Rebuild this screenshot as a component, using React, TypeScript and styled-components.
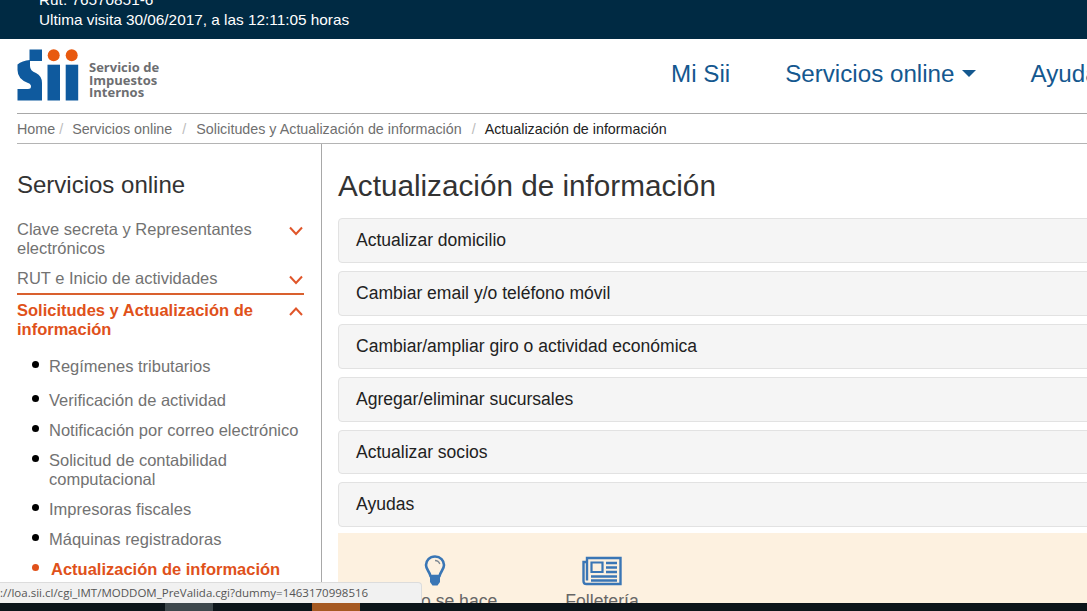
import React from "react";
import styled, { createGlobalStyle } from "styled-components";

const Global = createGlobalStyle`
  html, body { margin: 0; padding: 0; background: #fff; overflow: hidden; }
  * { box-sizing: border-box; }
  body { font-family: "Liberation Sans", Arial, sans-serif; }
`;

const Page = styled.div`
  position: relative;
  width: 1087px;
  height: 611px;
  overflow: hidden;
  background: #fff;
`;

const TopBar = styled.div`
  height: 39px;
  background: #002a43;
  color: #fff;
  padding: 0 0 9px 39px;
  font-size: 15.35px;
  line-height: 20px;
  overflow: hidden;
  display: flex;
  flex-direction: column;
  justify-content: flex-end;
`;

const TopLine = styled.div`
  white-space: nowrap;
`;

const HeaderRow = styled.div`
  height: 74px;
  display: flex;
  align-items: center;
  padding-left: 17px;
  white-space: nowrap;
`;

const LogoMark = styled.svg`
  width: 62px;
  height: 53px;
  flex: none;
  margin-top: -2px;
`;

const LogoText = styled.div`
  flex: none;
  margin-left: 10px;
  margin-top: 8px;
  width: 93px;
  font-family: "Open Sans", sans-serif;
  font-weight: 700;
  font-size: 13px;
  line-height: 12.8px;
  color: #6d6e71;
`;

const Nav = styled.nav`
  flex: none;
  display: flex;
  align-items: center;
  margin-left: 489px;
  margin-top: -5px;
`;

const NavLink = styled.a<{ $gap: number }>`
  color: #14588f;
  font-size: 24.2px;
  margin-right: ${(p) => p.$gap}px;
  display: inline-flex;
  align-items: center;
`;

const Caret = styled.span`
  display: inline-block;
  width: 0;
  height: 0;
  margin-left: 7px;
  margin-top: -1px;
  border-left: 7.5px solid transparent;
  border-right: 7.5px solid transparent;
  border-top: 7.5px solid #14588f;
`;

const Crumbs = styled.div`
  margin-left: 17px;
  height: 31px;
  border-top: 1.5px solid #a8a8a8;
  border-bottom: 1.5px solid #b4b4b4;
  display: flex;
  align-items: center;
  font-size: 14.3px;
  color: #6f6f6f;
  white-space: nowrap;
`;

const Crumb = styled.span<{ $current?: boolean }>`
  color: ${(p) => (p.$current ? "#222" : "#6f6f6f")};
`;

const Slash = styled.span<{ $l: number; $r: number }>`
  color: #bcbcbc;
  margin: 0 ${(p) => p.$r}px 0 ${(p) => p.$l}px;
`;

const Body = styled.div`
  display: flex;
  align-items: stretch;
  height: 468px;
`;

const Sidebar = styled.aside`
  width: 322px;
  flex: none;
  padding: 0 17px;
  border-right: 1.5px solid #a8a8a8;
`;

const SideTitle = styled.h2`
  margin: 27px 0 21px;
  font-size: 24px;
  line-height: 28px;
  font-weight: 400;
  color: #333;
`;

const Section = styled.div<{ $active?: boolean; $mb?: number }>`
  display: flex;
  justify-content: space-between;
  align-items: flex-start;
  font-size: 16.5px;
  line-height: 19px;
  color: ${(p) => (p.$active ? "#e0511a" : "#727272")};
  font-weight: ${(p) => (p.$active ? 700 : 400)};
  margin-bottom: ${(p) => p.$mb ?? 0}px;
`;

const SectionLabel = styled.span`
  max-width: 265px;
`;

const Chevron = styled.svg`
  width: 16px;
  height: 10px;
  flex: none;
  margin-top: 5.5px;
  fill: none;
  stroke: #e0562a;
  stroke-width: 2;
`;

const Rule = styled.div`
  height: 2px;
  background: #d9602e;
  margin: 5px 0 6px;
`;

const SubList = styled.ul`
  list-style: none;
  margin: 18px 0 0;
  padding: 0 0 0 15px;
`;

const SubItem = styled.li<{ $active?: boolean; $mt: number }>`
  position: relative;
  margin-top: ${(p) => p.$mt}px;
  padding-left: ${(p) => (p.$active ? 19 : 17)}px;
  font-size: 16.5px;
  line-height: 19px;
  color: ${(p) => (p.$active ? "#e0511a" : "#727272")};
  font-weight: ${(p) => (p.$active ? 700 : 400)};
  white-space: pre-line;

  &::before {
    content: "";
    position: absolute;
    left: 0;
    top: 4px;
    width: 7px;
    height: 7px;
    border-radius: 50%;
    background: ${(p) => (p.$active ? "#e0511a" : "#000")};
  }
`;

const Main = styled.main`
  flex: 1;
  min-width: 0;
  padding-left: 16px;
`;

const Title = styled.h1`
  margin: 24px 0 15px;
  font-size: 29.7px;
  line-height: 35px;
  font-weight: 400;
  color: #333;
  white-space: nowrap;
`;

const Rows = styled.div`
  display: flex;
  flex-direction: column;
  gap: 8px;
  margin-right: -20px;
`;

const Row = styled.div`
  height: 44.9px;
  padding-left: 17px;
  display: flex;
  align-items: center;
  background: #f5f5f5;
  border: 1px solid #e2e2e2;
  border-radius: 4px;
  font-size: 17.55px;
  color: #222;
`;

const Promo = styled.div`
  margin: 6px -20px 0 0;
  height: 120px;
  background: #fdf1e0;
  display: flex;
  padding-left: 30px;
  padding-top: 21px;
`;

const PromoItem = styled.div<{ $w: number }>`
  width: ${(p) => p.$w}px;
  display: flex;
  flex-direction: column;
  align-items: center;
  font-size: 17.6px;
  color: #666;
  white-space: nowrap;
`;

const PromoIcon = styled.svg<{ $mr?: number }>`
  height: 34px;
  flex: none;
  margin: 0 ${(p) => p.$mr ?? 0}px 3px 0;
`;

const Taskbar = styled.div`
  position: absolute;
  left: 0;
  right: 0;
  bottom: 0;
  height: 8px;
  background: #0c151a;
`;

const TaskButton = styled.span<{ $x: number; $c: string }>`
  position: absolute;
  top: 0;
  bottom: 0;
  left: ${(p) => p.$x}px;
  width: 48px;
  background: ${(p) => p.$c};
`;

const StatusTip = styled.div`
  position: absolute;
  left: 0;
  top: 582px;
  width: 422px;
  height: 21px;
  background: #f1f1f1;
  border: 1px solid #dcdcdc;
  border-left: none;
  border-bottom: none;
  border-top-right-radius: 4px;
  font-family: "Open Sans", sans-serif;
  font-size: 11.5px;
  line-height: 20px;
  color: #555;
  overflow: hidden;
  white-space: nowrap;
`;

const Down = () => (
  <Chevron viewBox="0 0 16 10"><path d="M2 1.5 8 8 14 1.5" /></Chevron>
);
const Up = () => (
  <Chevron viewBox="0 0 16 10"><path d="M2 8 8 1.5 14 8" /></Chevron>
);

const subs: { t: string; mt: number; active?: boolean }[] = [
  { t: "Regímenes tributarios", mt: 0 },
  { t: "Verificación de actividad", mt: 15 },
  { t: "Notificación por correo electrónico", mt: 11 },
  { t: "Solicitud de contabilidad\ncomputacional", mt: 11 },
  { t: "Impresoras fiscales", mt: 11 },
  { t: "Máquinas registradoras", mt: 11 },
  { t: "Actualización de información", mt: 11, active: true },
];

const rows = [
  "Actualizar domicilio",
  "Cambiar email y/o teléfono móvil",
  "Cambiar/ampliar giro o actividad económica",
  "Agregar/eliminar sucursales",
  "Actualizar socios",
  "Ayudas",
];

export default function App() {
  return (
    <Page>
      <Global />
      <TopBar>
        <TopLine>Rut: 76570851-6</TopLine>
        <TopLine>Ultima visita 30/06/2017, a las 12:11:05 horas</TopLine>
      </TopBar>
      <HeaderRow>
        <LogoMark viewBox="17 50 62 53">
          <path
            fill="#0f5a9e"
            d="M17.5 65.5Q22 61.5 30 61V67Q30 72 36 74 42 77 42 84V101.5H17.5V90H28Q31 90 31 87.5 31 85 28 84 17.5 80 17.5 71Z"
          />
          <rect x="29.5" y="50.5" width="12.5" height="11.5" fill="#0f5a9e" />
          <rect x="47.5" y="65.7" width="12.5" height="35.8" fill="#0f5a9e" />
          <rect x="65.7" y="65.7" width="12.5" height="35.8" fill="#0f5a9e" />
          <circle cx="53.7" cy="56.3" r="6" fill="#e8590f" />
          <circle cx="71.7" cy="56.3" r="6" fill="#e8590f" />
        </LogoMark>
        <LogoText>
          Servicio de
          <br />
          Impuestos
          <br />
          Internos
        </LogoText>
        <Nav>
          <NavLink $gap={55}>Mi Sii</NavLink>
          <NavLink $gap={55}>
            Servicios online
            <Caret />
          </NavLink>
          <NavLink $gap={0}>Ayuda</NavLink>
        </Nav>
      </HeaderRow>
      <Crumbs>
        <Crumb>Home</Crumb>
        <Slash $l={4} $r={9}>/</Slash>
        <Crumb>Servicios online</Crumb>
        <Slash $l={10} $r={10}>/</Slash>
        <Crumb>Solicitudes y Actualización de información</Crumb>
        <Slash $l={10} $r={9}>/</Slash>
        <Crumb $current>Actualización de información</Crumb>
      </Crumbs>
      <Body>
        <Sidebar>
          <SideTitle>Servicios online</SideTitle>
          <Section $mb={11}>
            <SectionLabel>Clave secreta y Representantes electrónicos</SectionLabel>
            <Down />
          </Section>
          <Section>
            <SectionLabel>RUT e Inicio de actividades</SectionLabel>
            <Down />
          </Section>
          <Rule />
          <Section $active>
            <SectionLabel>Solicitudes y Actualización de información</SectionLabel>
            <Up />
          </Section>
          <SubList>
            {subs.map((s) => (
              <SubItem key={s.t} $mt={s.mt} $active={s.active}>
                {s.t}
              </SubItem>
            ))}
          </SubList>
        </Sidebar>
        <Main>
          <Title>Actualización de información</Title>
          <Rows>
            {rows.map((r) => (
              <Row key={r}>{r}</Row>
            ))}
          </Rows>
          <Promo>
            <PromoItem $w={150}>
              <PromoIcon viewBox="0 0 24 34" width="24" $mr={16}>
                <path
                  d="M12 2.500C6.500 2.500 3 6.500 3 11c0 4.500 3.500 6.500 4.500 11h9c1-4.500 4.500-6.500 4.500-11 0-4.500-3.500-8.500-9-8.500Z"
                  fill="none"
                  stroke="#3a76b5"
                  strokeWidth="2.600"
                />
                <path d="M12 6.500c2 0 4 1.300 4.800 3.500" fill="none" stroke="#7f8a94" strokeWidth="1.300" />
                <path d="M7 22h10v6l-2.500 3.500h-5L7 28Z" fill="#3a76b5" />
              </PromoIcon>
              Cómo se hace.
            </PromoItem>
            <PromoItem $w={168}>
              <PromoIcon viewBox="0 0 40 29" width="40">
                <path
                  d="M5 1.500H38.500V27.500H4.500C2.500 27.500 1.500 26 1.500 24.500V5.500H5ZM5 5.500V24"
                  fill="none"
                  stroke="#3a76b5"
                  strokeWidth="2.400"
                />
                <path d="M9.500 6h11v9.500h-11Z" fill="none" stroke="#3a76b5" strokeWidth="2.200" />
                <path
                  d="M24 6.500h11M24 11h11M24 15.500h11M9 20h26M9 24h26"
                  stroke="#3a76b5"
                  strokeWidth="2.400"
                />
              </PromoIcon>
              Folletería
            </PromoItem>
          </Promo>
        </Main>
      </Body>
      <Taskbar>
        <TaskButton $x={165} $c="#3d474c" />
        <TaskButton $x={312} $c="#a65a22" />
      </Taskbar>
      <StatusTip>://loa.sii.cl/cgi_IMT/MODDOM_PreValida.cgi?dummy=1463170998516</StatusTip>
    </Page>
  );
}
